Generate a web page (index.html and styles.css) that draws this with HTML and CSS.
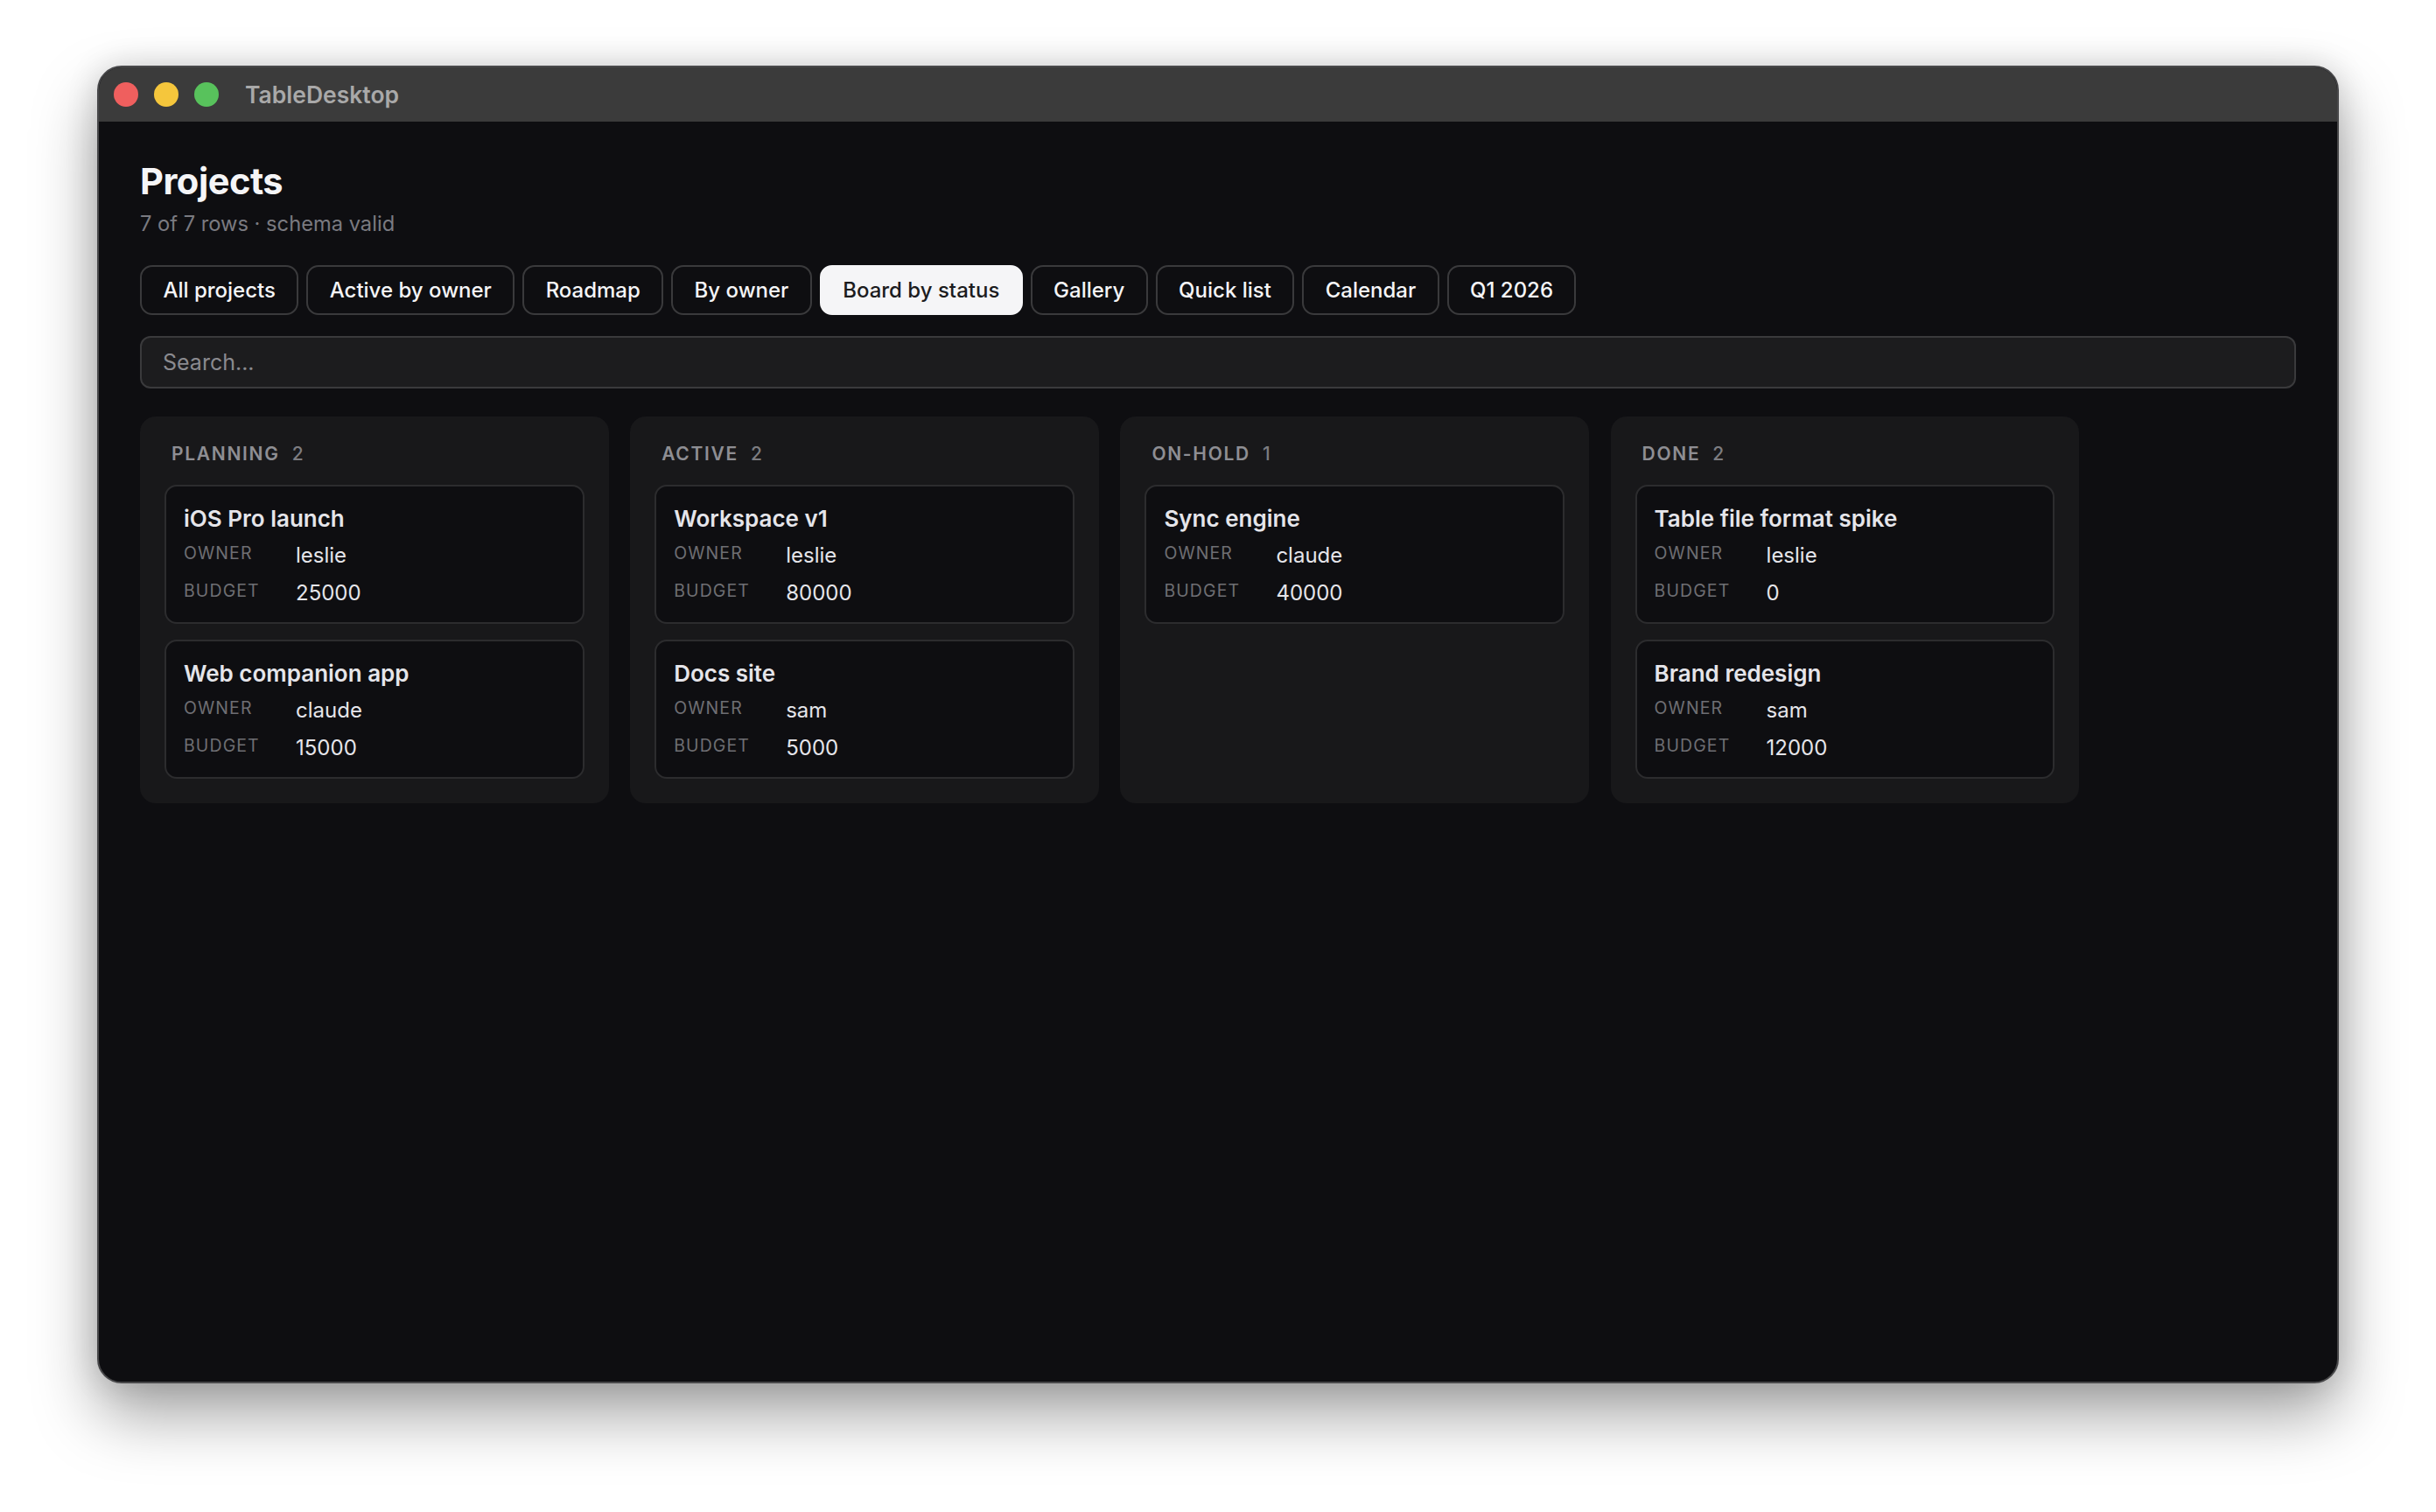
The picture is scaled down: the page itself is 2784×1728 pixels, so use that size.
FILE: index.html
```html
<!DOCTYPE html>
<html lang="en">
<head>
<meta charset="utf-8">
<title>TableDesktop</title>
<link rel="stylesheet" href="styles.css">
</head>
<body>
<div class="window">
  <header class="titlebar">
    <span class="dot red"></span><span class="dot yellow"></span><span class="dot green"></span>
    <span class="app-name">TableDesktop</span>
  </header>
  <main class="main">
    <h1 class="title">Projects</h1>
    <p class="subtitle">7 of 7 rows · schema valid</p>
    <nav class="tabs">
      <button class="tab">All projects</button>
      <button class="tab">Active by owner</button>
      <button class="tab">Roadmap</button>
      <button class="tab">By owner</button>
      <button class="tab active">Board by status</button>
      <button class="tab">Gallery</button>
      <button class="tab">Quick list</button>
      <button class="tab">Calendar</button>
      <button class="tab">Q1 2026</button>
    </nav>
    <div class="search">Search...</div>
    <section class="board">
      <div class="column">
        <div class="col-head"><span class="col-name">PLANNING</span><span class="col-count">2</span></div>
        <article class="card"><h3 class="card-title">iOS Pro launch</h3><dl class="fields"><dt>OWNER</dt><dd>leslie</dd><dt>BUDGET</dt><dd>25000</dd></dl></article>
        <article class="card"><h3 class="card-title">Web companion app</h3><dl class="fields"><dt>OWNER</dt><dd>claude</dd><dt>BUDGET</dt><dd>15000</dd></dl></article>
      </div>
      <div class="column">
        <div class="col-head"><span class="col-name">ACTIVE</span><span class="col-count">2</span></div>
        <article class="card"><h3 class="card-title">Workspace v1</h3><dl class="fields"><dt>OWNER</dt><dd>leslie</dd><dt>BUDGET</dt><dd>80000</dd></dl></article>
        <article class="card"><h3 class="card-title">Docs site</h3><dl class="fields"><dt>OWNER</dt><dd>sam</dd><dt>BUDGET</dt><dd>5000</dd></dl></article>
      </div>
      <div class="column">
        <div class="col-head"><span class="col-name">ON-HOLD</span><span class="col-count">1</span></div>
        <article class="card"><h3 class="card-title">Sync engine</h3><dl class="fields"><dt>OWNER</dt><dd>claude</dd><dt>BUDGET</dt><dd>40000</dd></dl></article>
      </div>
      <div class="column">
        <div class="col-head"><span class="col-name">DONE</span><span class="col-count">2</span></div>
        <article class="card"><h3 class="card-title">Table file format spike</h3><dl class="fields"><dt>OWNER</dt><dd>leslie</dd><dt>BUDGET</dt><dd>0</dd></dl></article>
        <article class="card"><h3 class="card-title">Brand redesign</h3><dl class="fields"><dt>OWNER</dt><dd>sam</dd><dt>BUDGET</dt><dd>12000</dd></dl></article>
      </div>
    </section>
  </main>
</div>
</body>
</html>
```
FILE: styles.css
```css
* { box-sizing: border-box; }
html, body { margin: 0; height: 100%; }
body {
  background: #fff;
  padding: 75px 111px 0;
  font-family: Inter, "Liberation Sans", sans-serif;
  overflow: hidden;
}
.window {
  height: 1506px;
  border: 2px solid #48484a;
  border-radius: 28px;
  background: #0e0e11;
  box-shadow: 0 36px 72px rgba(0,0,0,.36), 0 0 36px rgba(0,0,0,.14);
  display: flex;
  flex-direction: column;
  overflow: hidden;
}
.titlebar {
  height: 62px;
  flex: none;
  background: #3b3b3b;
  display: flex;
  align-items: center;
  padding-left: 17px;
  gap: 18px;
}
.dot { width: 28px; height: 28px; border-radius: 50%; flex: none; }
.red { background: #ef5f5e; }
.yellow { background: #f5c63c; }
.green { background: #58c25c; }
.app-name {
  margin-left: 12px;
  font-size: 26.5px;
  font-weight: 600;
  color: #a9a9a9;
}
.main { flex: 1; padding: 41px 47px 0; }
.title {
  margin: 0;
  font-size: 41.6px;
  line-height: 54px;
  font-weight: 700;
  color: #f5f5f7;
  letter-spacing: -0.5px;
}
.subtitle {
  margin: 6px 0 0;
  font-size: 23.7px;
  line-height: 32px;
  color: #7a7a80;
}
.tabs { display: flex; gap: 9px; margin-top: 31px; }
.tab {
  height: 57px;
  padding: 0 24.4px;
  border: 2px solid #3a3a3c;
  border-radius: 14px;
  background: transparent;
  color: #f5f5f7;
  font-family: inherit;
  font-size: 24px;
  font-weight: 500;
}
.tab.active { background: #f5f5f7; border-color: #f5f5f7; color: #1c1c1e; }
.search {
  height: 60px;
  margin-top: 24px;
  padding: 0 24px;
  display: flex;
  align-items: center;
  background: #1c1c1e;
  border: 2px solid #3a3a3c;
  border-radius: 12px;
  color: #8a8a8f;
  font-size: 25px;
}
.board { display: flex; gap: 24.6px; margin-top: 32px; align-items: stretch; }
.column {
  width: 535.6px;
  background: #18181a;
  border-radius: 18px;
  padding: 28px;
  display: flex;
  flex-direction: column;
  gap: 18px;
}
.col-head {
  height: 28px;
  margin: 0 8px 4px;
  display: flex;
  align-items: center;
  gap: 14px;
  color: #8e8e93;
  font-size: 21px;
}
.col-name { font-weight: 600; letter-spacing: 1.7px; }
.col-count { font-weight: 500; color: #7c7c80; letter-spacing: 1px; }
.card {
  height: 159px;
  background: #0e0e11;
  border: 2px solid #2c2c2e;
  border-radius: 14px;
  padding: 21px 20px 0;
}
.card-title {
  margin: 0;
  font-size: 26px;
  line-height: 32px;
  font-weight: 600;
  color: #e5e5ea;
}
.fields {
  margin: 8px 0 0;
  display: grid;
  grid-template-columns: 128px 1fr;
  grid-auto-rows: 42.5px;
}
.fields dt {
  font-size: 19.5px;
  line-height: 30px;
  letter-spacing: 1.1px;
  color: #6e6e73;
}
.fields dd {
  margin: 0;
  font-size: 24px;
  line-height: 36px;
  color: #e5e5ea;
}
```
